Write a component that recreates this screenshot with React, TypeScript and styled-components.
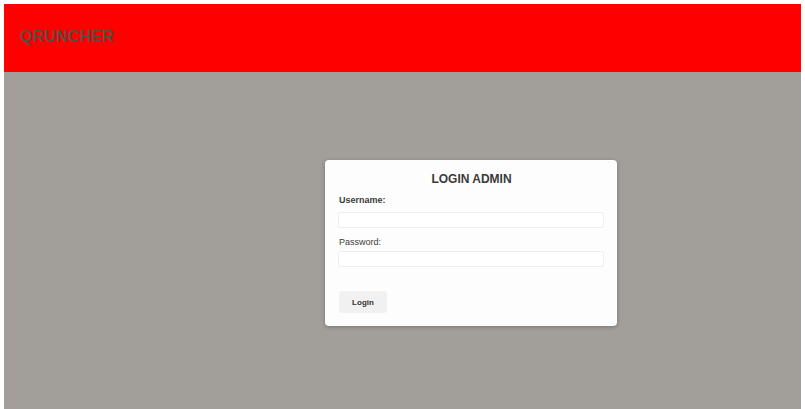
import React from "react";
import styled, { createGlobalStyle } from "styled-components";

const Global = createGlobalStyle`
  html, body {
    margin: 0;
    padding: 0;
    background: #ffffff;
  }
  body {
    padding: 4px 4px 0;
    font-family: "Liberation Sans", Arial, sans-serif;
  }
`;

const Page = styled.div`
  display: flex;
  flex-direction: column;
  height: 405px;
`;

const Header = styled.header`
  height: 68px;
  background: #ff0000;
  display: flex;
  align-items: center;
  padding: 0 16px;
`;

const Brand = styled.div`
  font-size: 16px;
  font-weight: 700;
  color: #5e4b3f;
  letter-spacing: 0.2px;
  margin-top: -3px;
`;

const Main = styled.main`
  flex: 1;
  background: #a29e9a;
  padding: 88px 0 0 321px;
`;

const Card = styled.form`
  width: 292px;
  height: 166px;
  box-sizing: border-box;
  background: #fdfdfd;
  border-radius: 4px;
  box-shadow: 0 1px 4px rgba(0, 0, 0, 0.25);
  padding: 12px 13px 0 14px;
  display: flex;
  flex-direction: column;
`;

const Title = styled.h2`
  margin: 0 0 9px;
  text-align: center;
  font-size: 12px;
  font-weight: 700;
  color: #3a3a3a;
  line-height: 14px;
`;

const Label = styled.label<{ $strong?: boolean }>`
  font-size: 9px;
  line-height: 11px;
  font-weight: ${(p) => (p.$strong ? 700 : 400)};
  color: #3c3c3c;
  margin-bottom: ${(p) => (p.$strong ? 6 : 3)}px;
`;

const Input = styled.input<{ $gap: number }>`
  height: 16px;
  box-sizing: border-box;
  border: 1px solid #efefef;
  border-radius: 2px;
  background: #ffffff;
  margin: 0 0 ${(p) => p.$gap}px -1px;
  outline: none;
  font-size: 9px;
  font-family: inherit;
`;

const Button = styled.button`
  align-self: flex-start;
  margin-top: 12px;
  width: 48px;
  height: 22px;
  border: none;
  border-radius: 3px;
  background: #f1f1f1;
  color: #333;
  font-family: inherit;
  font-size: 8px;
  font-weight: 700;
  padding: 0;
`;

export default function App() {
  return (
    <>
      <Global />
      <Page>
        <Header>
          <Brand>QRUNCHER</Brand>
        </Header>
        <Main>
          <Card onSubmit={(e) => e.preventDefault()}>
            <Title>LOGIN ADMIN</Title>
            <Label $strong htmlFor="username">Username:</Label>
            <Input id="username" type="text" $gap={9} />
            <Label htmlFor="password">Password:</Label>
            <Input id="password" type="password" $gap={12} />
            <Button type="submit">Login</Button>
          </Card>
        </Main>
      </Page>
    </>
  );
}
